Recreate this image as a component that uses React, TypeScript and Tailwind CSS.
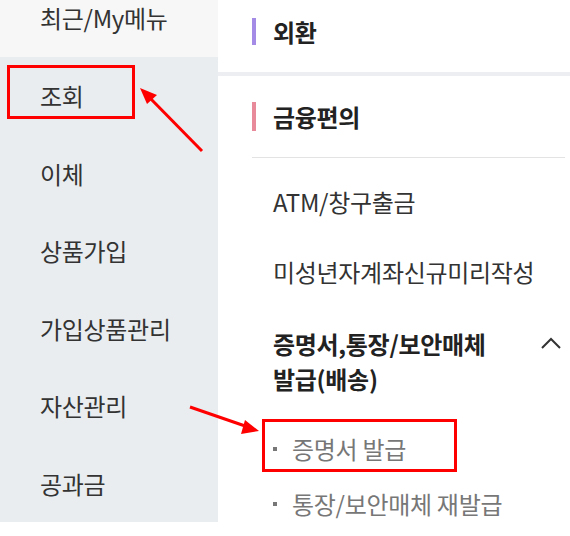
import React from "react"

const leftMenu = ["조회", "이체", "상품가입", "가입상품관리", "자산관리", "공과금"]

const ChevronUp = () => (
    <svg width="22" height="14" viewBox="0 0 22 14" fill="none">
        <polyline points="2,12 11,3 20,12" stroke="#333" strokeWidth="2" />
    </svg>
)

const Arrows = () => (
    <svg className="absolute inset-0 pointer-events-none" width="570" height="536" viewBox="0 0 570 536">
        {/* arrow to 조회 */}
        <line x1="202" y1="151" x2="148" y2="96" stroke="#ff0000" strokeWidth="3" />
        <polygon points="140,88 157,95 147,104" fill="#ff0000" />
        {/* arrow to 증명서 발급 */}
        <line x1="190" y1="407" x2="248" y2="427" stroke="#ff0000" strokeWidth="3" />
        <polygon points="259,431 245,420 241,434" fill="#ff0000" />
    </svg>
)

const App = () => {
    return (
        <div className="relative w-[570px] h-[536px] bg-white overflow-hidden flex font-['Noto_Sans_CJK_KR',sans-serif] text-[24px] leading-[35px] tracking-[-0.3px]">
            {/* left menu */}
            <div className="w-[218px] flex flex-col">
                <div className="h-[57px] bg-[#f7f7f7] pl-10 text-[#333]">
                    최근/My메뉴
                </div>
                <div className="h-[465px] bg-[#e9edf0] flex flex-col">
                    {leftMenu.map((m) => (
                        <div key={m} className="h-[77.5px] pl-10 flex items-center text-[#333]">
                            {m}
                        </div>
                    ))}
                </div>
            </div>

            {/* right panel */}
            <div className="flex-1 flex flex-col">
                <div className="h-[72px] pl-[34px] pb-[10px] flex items-center">
                    <span className="w-[4px] h-[27px] bg-[#a38be6] mr-[17px]" />
                    <span className="font-bold text-[#222]">외환</span>
                </div>
                <div className="h-[4px] bg-[#eceef1]" />
                <div className="pl-[34px] pr-[5px]">
                    <div className="h-[82px] flex items-center border-b border-[#e3e3e3]">
                        <span className="w-[4px] h-[29px] bg-[#e98a9b] mr-[17px]" />
                        <span className="font-bold text-[#222]">금융편의</span>
                    </div>
                    <div className="pl-[21px] pt-[26px] text-[#333]">
                        <div>ATM/창구출금</div>
                        <div className="mt-[35px]">미성년자계좌신규미리작성</div>
                        <div className="mt-[37px] flex justify-between items-start">
                            <div className="font-bold text-[#222]">
                                증명서,통장/보안매체
                                <br />
                                발급(배송)
                            </div>
                            <div className="pt-[10px] pr-[3px]">
                                <ChevronUp />
                            </div>
                        </div>
                        <div className="mt-[35px] flex items-center text-[#777]">
                            <span className="w-[4px] h-[4px] bg-[#777] mr-[15px]" />
                            증명서 발급
                        </div>
                        <div className="mt-[20px] flex items-center text-[#777]">
                            <span className="w-[4px] h-[4px] bg-[#777] mr-[15px]" />
                            통장/보안매체 재발급
                        </div>
                    </div>
                </div>
            </div>

            {/* annotation boxes */}
            <div className="absolute left-[7px] top-[65px] w-[128px] h-[54px] border-[3px] border-[#ff0000]" />
            <div className="absolute left-[262px] top-[419px] w-[195px] h-[53px] border-[3px] border-[#ff0000]" />
            <Arrows />
        </div>
    )
}

export default App
